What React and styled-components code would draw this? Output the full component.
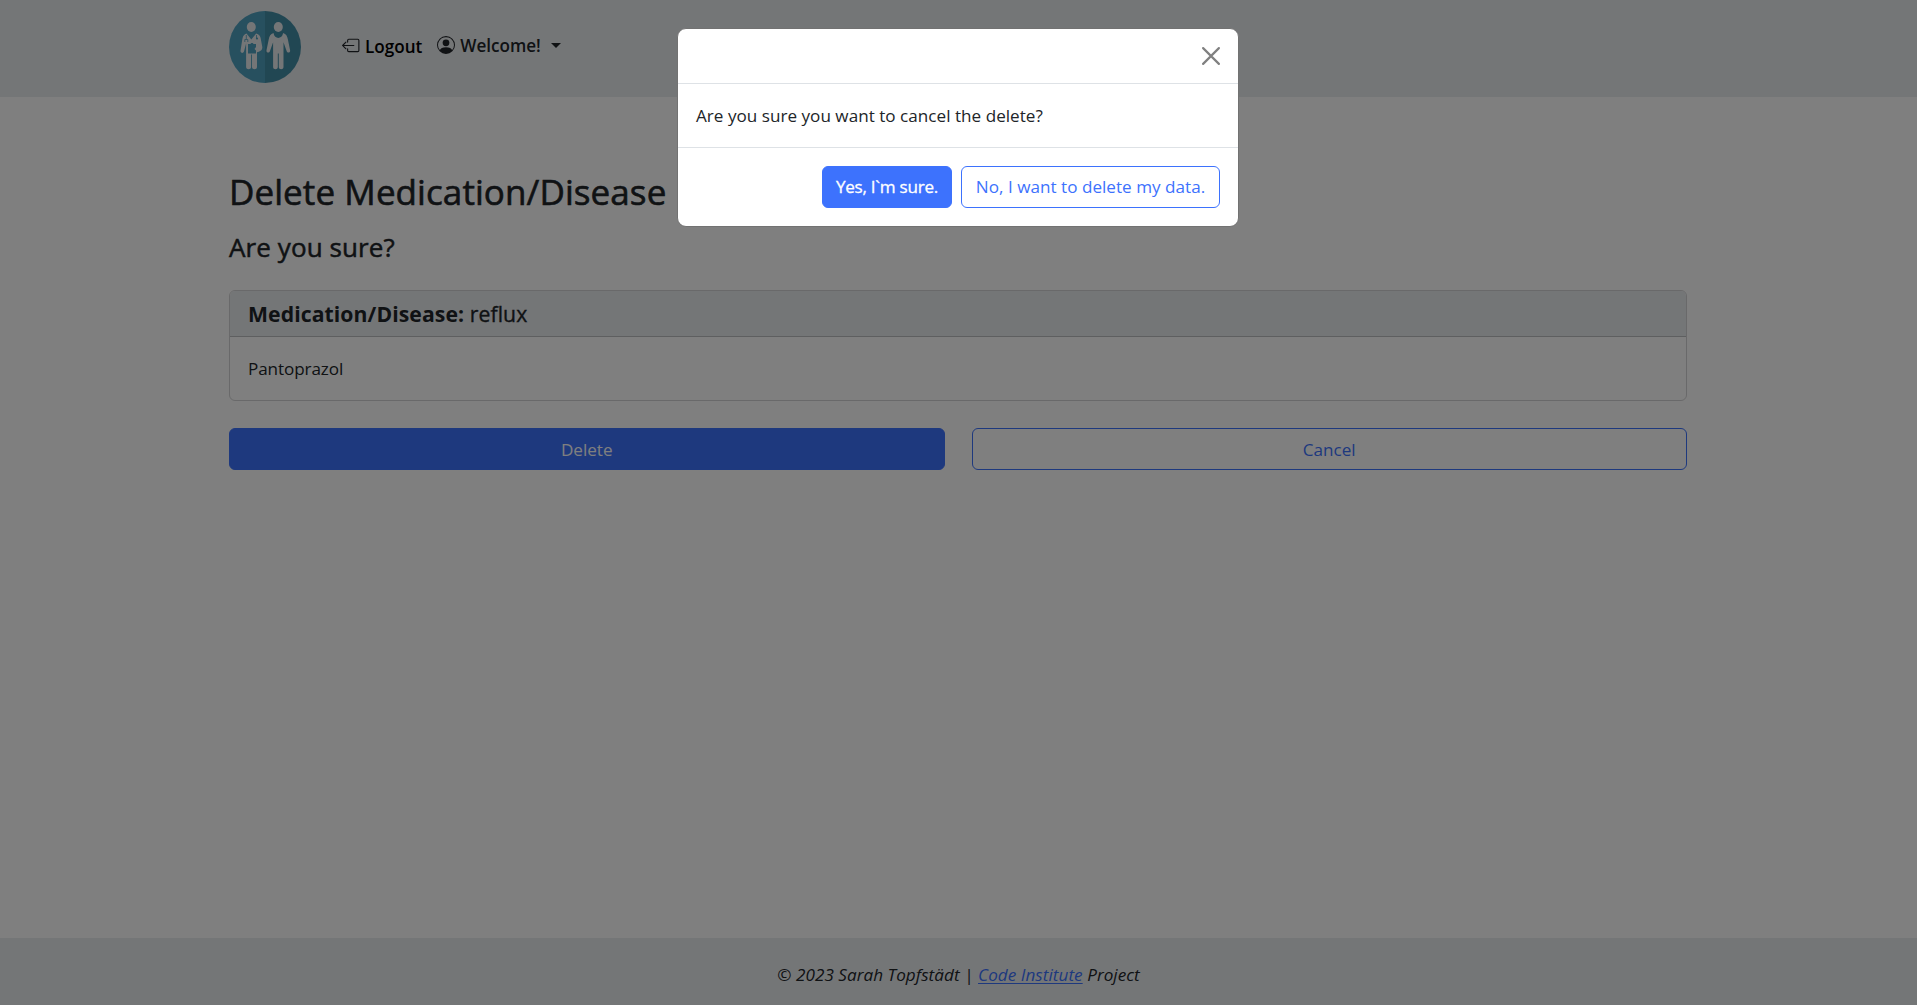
import React from "react";
import styled, { createGlobalStyle } from "styled-components";

const GlobalStyle = createGlobalStyle`
  *, *::before, *::after { box-sizing: border-box; }
  html, body { margin: 0; padding: 0; }
  body {
    background: #fff;
    color: #212529;
    font: 400 17.1px/24px "Open Sans", "Noto Sans", sans-serif;
    overflow: hidden;
  }
`;

const T = styled.span`
  display: inline-block;
  white-space: nowrap;
  letter-spacing: ${(p) => p.$ls || 0}px;
  -webkit-text-stroke: ${(p) => p.$stroke || 0}px currentColor;
`;

const Page = styled.div`
  display: flex;
  flex-direction: column;
  height: 1005px;
`;

const Header = styled.header`
  display: flex;
  align-items: flex-start;
  height: 97px;
  padding: 11px 229px 0;
  background: #e9ecef;
`;

const Brand = styled.a`
  display: block;
  width: 72px;
  height: 72px;
  margin-right: 41px;
`;

const Nav = styled.nav`
  display: flex;
  padding-top: 22px;
  gap: 15px;
  font-weight: 600;
`;

const NavItem = styled.a`
  display: flex;
  align-items: center;
  height: 24px;
  padding-top: ${(p) => p.$drop || 0}px;
  gap: 5px;
  color: ${(p) => p.$color};

  svg { margin-bottom: 1px; }
  span { padding-top: 1px; }
`;

const Caret = styled.i`
  margin-left: 5px;
  border-top: 5px solid #212529;
  border-left: 5px solid transparent;
  border-right: 5px solid transparent;
`;

const Main = styled.main`
  flex: 1;
  width: 1458px;
  margin-left: 229px;
  padding-top: 71px;
`;

const Title = styled.h1`
  margin: 0;
  font-size: 35px;
  line-height: 48px;
  font-weight: 400;
`;

const Subtitle = styled.h2`
  margin: 15px 0 27px;
  font-size: 26px;
  line-height: 32px;
  font-weight: 400;
`;

const Card = styled.section`
  border: 1px solid #d2d3d4;
  border-radius: 6px;
  overflow: hidden;
`;

const CardHeader = styled.div`
  height: 46px;
  padding: 0 18px;
  border-bottom: 1px solid #bcbec1;
  background: #e9ecef;
  font-size: 21.2px;
  line-height: 45px;
  font-weight: 400;

  strong { font-weight: 700; -webkit-text-stroke: 0; }
`;

const CardBody = styled.div`
  height: 63px;
  padding: 20px 18px;
`;

const Actions = styled.div`
  display: grid;
  grid-template-columns: 1fr 1fr;
  gap: 27px;
  margin-top: 27px;
`;

const Button = styled.button`
  height: 42px;
  padding: ${(p) => p.$padTop || 0}px 0 0;
  width: ${(p) => p.$width || "auto"};
  border: 1px solid #3d72fd;
  border-radius: 6px;
  background: ${(p) => (p.$outline ? "transparent" : "#3d72fd")};
  color: ${(p) => (p.$outline ? "#3d72fd" : "#fff")};
  font: inherit;
`;

const Footer = styled.footer`
  height: 67px;
  padding-top: 25px;
  background: #e9ecef;
  text-align: center;
  font-style: italic;

  a {
    color: #3d72fd;
    text-decoration-thickness: 1px;
    text-underline-offset: 2px;
  }
`;

const Backdrop = styled.div`
  position: fixed;
  inset: 0;
  padding-top: 28px;
  background: rgba(0, 0, 0, 0.5);
`;

const Dialog = styled.div`
  width: 562px;
  height: 199px;
  margin-left: 677px;
  border: 1px solid #727272;
  border-radius: 9px;
  background: #fff;
  overflow: hidden;
`;

const DialogHeader = styled.div`
  display: flex;
  align-items: center;
  justify-content: flex-end;
  height: 55px;
  padding-right: 18px;
  border-bottom: 1px solid #dee2e6;
`;

const DialogBody = styled.div`
  height: 64px;
  padding: 20px 18px;
  border-bottom: 1px solid #dee2e6;
`;

const DialogFooter = styled.div`
  display: flex;
  justify-content: flex-end;
  gap: 9px;
  padding: 18px;
`;

const Logo = () => (
  <svg width="72" height="72" viewBox="0 0 72 72">
    <defs>
      <clipPath id="disc"><circle cx="36" cy="36" r="36" /></clipPath>
    </defs>
    <g clipPath="url(#disc)">
      <path d="M0 0h36v72H0z" fill="#4ea0be" />
      <path d="M36 0h36v72H36z" fill="#438ea6" />
    </g>
    <g fill="#e9ecef">
      <ellipse cx="22.300" cy="16" rx="4.500" ry="5" />
      <path d="M17.500 22.500l4.800 6 4.800-6 1.900.8c2 1 2.600 3 3 5.700l1.200 6.500c.6 3-1.200 4.500-3.400 5.200l-1.800.5V56c0 3-5 3-5 0V43.500h-.9V56c0 3-5 3-5 0V32.500L15 40.500c-.8 2.300-3.800 1.500-3.500-.7l1.700-10.800c.5-3 1.200-4.700 2.800-5.700z" />
      <ellipse cx="49.300" cy="16" rx="4.500" ry="5" />
      <path d="M44.500 22c1 6.500 8.600 6.500 9.600 0 3 .8 4.200 3.200 4.800 6.500l2.200 10.700c.5 2.400-2.600 3.300-3.400 1l-3.200-9V56c0 3-4.700 3-4.700 0V42.500h-1V56c0 3-4.700 3-4.700 0V31.200l-3.200 9c-.8 2.300-3.900 1.400-3.400-1l2.200-10.700c.6-3.300 1.800-5.700 4.800-6.500z" />
    </g>
    <path d="M19 33h2.500c0-1.500 3-1.500 3 0H27v3l-1.500 2 1.500 1.500v3h-8z" fill="#4ea0be" />
    <path d="M17.300 24v4m-1.500 3v-2.500h3V31M27.500 24v3" fill="none" stroke="#4ea0be" strokeWidth=".8" />
    <circle cx="28" cy="27.500" r="1.100" fill="#4ea0be" />
  </svg>
);

const LogoutIcon = () => (
  <svg width="18" height="18" viewBox="0 0 16 16" fill="#212529">
    <path d="M4.500 3v1.500a.5.5 0 0 0 1 0V3a.5.5 0 0 1 .5-.5h8a.5.5 0 0 1 .5.5v9a.5.5 0 0 1-.5.5H6a.5.5 0 0 1-.5-.5v-1.500a.5.5 0 0 0-1 0V12A1.500 1.500 0 0 0 6 13.500h8a1.500 1.500 0 0 0 1.500-1.500V3A1.500 1.500 0 0 0 14 1.500H6A1.500 1.500 0 0 0 4.500 3" />
    <path d="M.15 7.850a.5.5 0 0 1 0-.7l3-3a.5.5 0 0 1 .7.7L1.700 7h8.800a.5.5 0 0 1 0 1H1.700l2.150 2.150a.5.5 0 0 1-.7.7z" />
  </svg>
);

const PersonIcon = () => (
  <svg width="18" height="18" viewBox="0 0 16 16" fill="#212529">
    <path d="M11 6a3 3 0 1 1-6 0 3 3 0 0 1 6 0" />
    <path fillRule="evenodd" d="M0 8a8 8 0 1 1 16 0A8 8 0 0 1 0 8m8-7a7 7 0 0 0-5.468 11.370C3.242 11.226 4.805 10 8 10s4.757 1.225 5.468 2.370A7 7 0 0 0 8 1" />
  </svg>
);

const CloseIcon = () => (
  <svg width="18" height="18" viewBox="0 0 16 16" stroke="#808080" strokeWidth="1.900" strokeLinecap="round">
    <path d="M1 1l14 14M15 1L1 15" />
  </svg>
);

export default function App() {
  return (
    <>
      <GlobalStyle />
      <Page>
        <Header>
          <Brand><Logo /></Brand>
          <Nav>
            <NavItem $color="#000" $drop={2}><LogoutIcon /><T>Logout</T></NavItem>
            <NavItem $color="#212529" $drop={1}><PersonIcon /><T>Welcome!</T><Caret /></NavItem>
          </Nav>
        </Header>
        <Main>
          <Title><T $stroke={0.6} $ls={0.08}>Delete Medication/Disease</T></Title>
          <Subtitle><T $stroke={0.5} $ls={0.1}>Are you sure?</T></Subtitle>
          <Card>
            <CardHeader><T $stroke={0.35} $ls={0.08}><strong>Medication/Disease:</strong> reflux</T></CardHeader>
            <CardBody><T $ls={-0.1}>Pantoprazol</T></CardBody>
          </Card>
          <Actions>
            <Button $padTop={1}><T>Delete</T></Button>
            <Button $outline $padTop={1}><T>Cancel</T></Button>
          </Actions>
        </Main>
        <Footer>
          <T $ls={0.05}>© 2023 Sarah Topfstädt | <a href="#project">Code Institute</a> Project</T>
        </Footer>
      </Page>
      <Backdrop>
        <Dialog role="dialog">
          <DialogHeader><CloseIcon /></DialogHeader>
          <DialogBody><T $ls={0.02}>Are you sure you want to cancel the delete?</T></DialogBody>
          <DialogFooter>
            <Button $width="130px"><T $stroke={0.3} $ls={-0.25}>Yes, I`m sure.</T></Button>
            <Button $outline $width="259px"><T $ls={0.02}>No, I want to delete my data.</T></Button>
          </DialogFooter>
        </Dialog>
      </Backdrop>
    </>
  );
}
